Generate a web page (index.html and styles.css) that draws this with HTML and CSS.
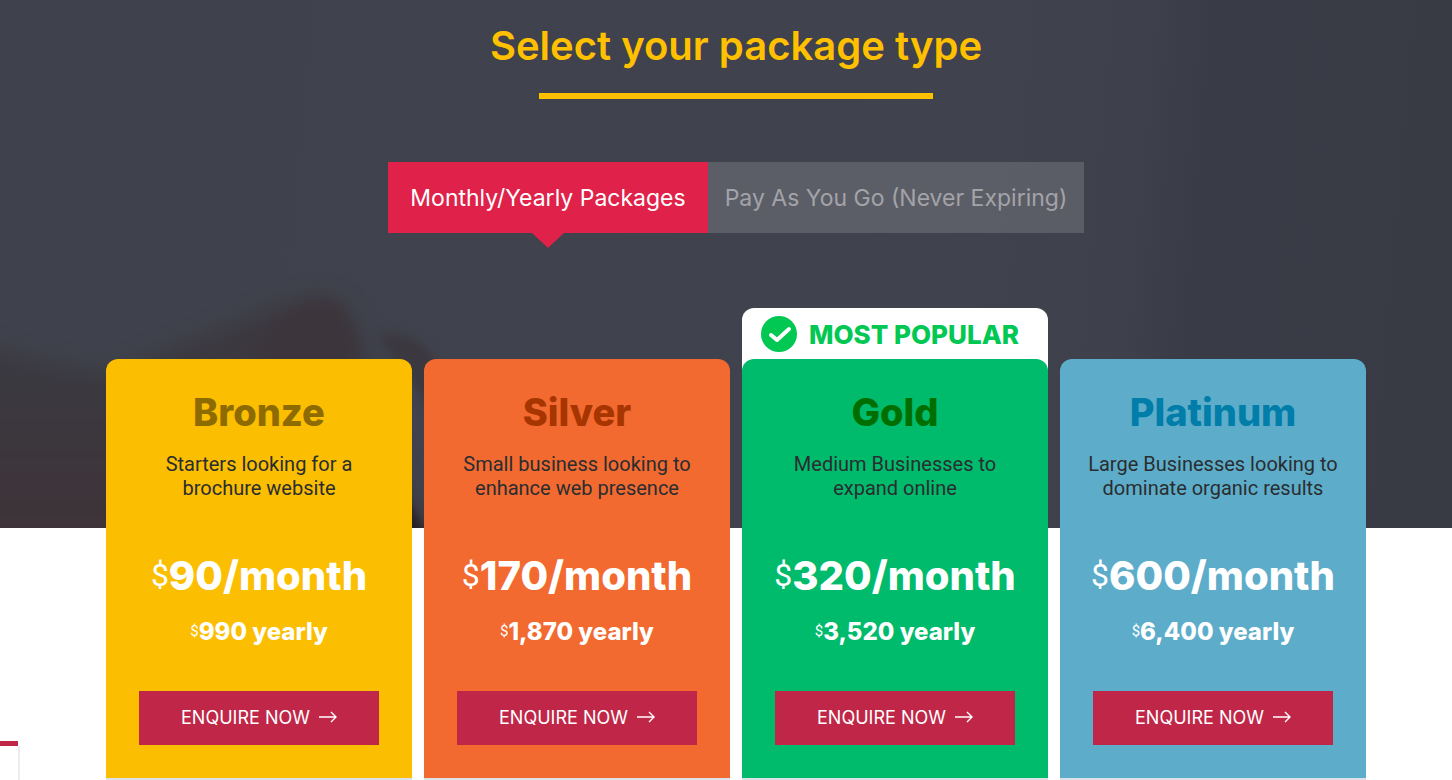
FILE: index.html
```html
<!DOCTYPE html>
<html lang="en">
<head>
  <meta charset="UTF-8">
  <meta name="viewport" content="width=device-width, initial-scale=1.0">
  <title>Packages</title>
  <link rel="stylesheet" href="styles.css">
</head>
<body>

<section class="hero">
  <svg class="hero-bg" viewBox="0 0 1452 528" preserveAspectRatio="none" aria-hidden="true">
    <defs>
      <filter id="soft" x="-20%" y="-20%" width="140%" height="140%" color-interpolation-filters="sRGB">
        <feGaussianBlur stdDeviation="10"/>
      </filter>
      <filter id="softer" x="-20%" y="-20%" width="140%" height="140%" color-interpolation-filters="sRGB">
        <feGaussianBlur stdDeviation="4"/>
      </filter>
      <linearGradient id="hand" x1="0" y1="0" x2="0" y2="1">
        <stop offset="0" stop-color="#3d373e"/>
        <stop offset="0.3" stop-color="#3b3940"/>
        <stop offset="1" stop-color="#3e3237"/>
      </linearGradient>
    </defs>
    <path d="M-40 335 Q20 362 110 372 Q170 350 250 318 Q315 288 340 303 Q358 325 366 360 L400 480 L440 560 L-40 560 Z" fill="url(#hand)" filter="url(#soft)"/>
    <path d="M280 320 Q315 290 338 302 Q352 318 358 350 L355 380 L230 380 Z" fill="#3d343a" filter="url(#softer)" opacity="0.5"/>
    <path d="M378 336 Q405 330 422 345 Q445 365 455 400 L440 420 L410 380 Z" fill="#3c383f" filter="url(#softer)"/>
    <path d="M396 490 L412 508 L440 560 L390 560 Z" fill="#242125" filter="url(#softer)"/>
  </svg>
  <div class="hero-content">
    <h1>Select your package type</h1>
    <div class="tabs">
      <button type="button" class="tab active">Monthly/Yearly Packages</button>
      <button type="button" class="tab">Pay As You Go (Never Expiring)</button>
    </div>
  </div>
</section>

<section class="packages">
  <div class="card bronze">
    <h2>Bronze</h2>
    <p class="desc">Starters looking for a<br>brochure website</p>
    <p class="price"><span>$</span>90/month</p>
    <p class="yearly"><span>$</span>990 yearly</p>
    <a class="enquire" href="#">ENQUIRE NOW
      <svg viewBox="0 0 18 12" aria-hidden="true"><path d="M0 6H17M12 1L17 6L12 11"/></svg>
    </a>
  </div>
  <div class="card silver">
    <h2>Silver</h2>
    <p class="desc">Small business looking to<br>enhance web presence</p>
    <p class="price"><span>$</span>170/month</p>
    <p class="yearly"><span>$</span>1,870 yearly</p>
    <a class="enquire" href="#">ENQUIRE NOW
      <svg viewBox="0 0 18 12" aria-hidden="true"><path d="M0 6H17M12 1L17 6L12 11"/></svg>
    </a>
  </div>
  <div class="card gold">
    <div class="popular">
      <svg viewBox="0 0 36 36" aria-hidden="true">
        <circle cx="18" cy="18" r="18"/>
        <path d="M10 19L16 24L28 13"/>
      </svg>
      MOST POPULAR
    </div>
    <h2>Gold</h2>
    <p class="desc">Medium Businesses to<br>expand online</p>
    <p class="price"><span>$</span>320/month</p>
    <p class="yearly"><span>$</span>3,520 yearly</p>
    <a class="enquire" href="#">ENQUIRE NOW
      <svg viewBox="0 0 18 12" aria-hidden="true"><path d="M0 6H17M12 1L17 6L12 11"/></svg>
    </a>
  </div>
  <div class="card platinum">
    <h2>Platinum</h2>
    <p class="desc">Large Businesses looking to<br>dominate organic results</p>
    <p class="price"><span>$</span>600/month</p>
    <p class="yearly"><span>$</span>6,400 yearly</p>
    <a class="enquire" href="#">ENQUIRE NOW
      <svg viewBox="0 0 18 12" aria-hidden="true"><path d="M0 6H17M12 1L17 6L12 11"/></svg>
    </a>
  </div>
</section>

<div class="side-panel"></div>

</body>
</html>
```
FILE: styles.css
```css
* {
  box-sizing: border-box;
}
body {
  margin: 0;
  background: #fff;
  font-family: Inter, "Liberation Sans", sans-serif;
}
h1, h2, p {
  margin: 0;
}

/* Hero */
.hero {
  position: relative;
  overflow: hidden;
  background: linear-gradient(95deg, #3f424c 0%, #40424d 65%, #3e404b 77%, #393b46 81%, #383a44 100%);
}
.hero-bg {
  position: absolute;
  top: 0;
  left: 0;
  width: 100%;
  height: 100%;
}
.hero-content {
  position: relative;
  display: flex;
  flex-direction: column;
  align-items: center;
  padding: 22px 0 295px 20px;
}
h1 {
  color: #ffc000;
  font-size: 40px;
  font-weight: 600;
  line-height: 48px;
}
h1::after {
  content: "";
  display: block;
  width: 80%;
  height: 6px;
  margin: 23px auto 0;
  background: #ffc000;
}
.tabs {
  display: grid;
  grid-template-columns: 320px 376px;
  margin-top: 63px;
}
.tab {
  position: relative;
  height: 71px;
  padding: 0;
  border: none;
  background: rgba(255, 255, 255, 0.15);
  color: #a3a3a8;
  font-family: inherit;
  font-size: 23px;
  cursor: pointer;
}
.tab.active {
  background: #e02149;
  color: #fff;
}
.tab.active::after {
  content: "";
  position: absolute;
  top: 100%;
  left: 50%;
  margin-left: -16px;
  border: 16px solid transparent;
  border-top: 15px solid #e02149;
  border-bottom: 0;
}

/* Packages */
.packages {
  position: relative;
  z-index: 1;
  display: grid;
  grid-template-columns: repeat(4, 1fr);
  gap: 12px;
  margin-top: -169px;
  padding: 0 86px 0 106px;
}
.card {
  position: relative;
  display: flex;
  flex-direction: column;
  align-items: center;
  padding-top: 29px;
  border-radius: 12px 12px 0 0;
  color: #fff;
  text-align: center;
}
.card::after {
  content: "";
  align-self: stretch;
  height: 2px;
  margin-top: 33px;
  background: #dde2e8;
}
.bronze { background: #fbbe00; }
.silver { background: #f26a30; }
.gold { background: #00bb6c; }
.platinum { background: #5dadca; }
.bronze h2 { color: #8d6b00; }
.silver h2 { color: #a63500; }
.gold h2 { color: #006e00; }
.platinum h2 { color: #007da9; }

h2 {
  font-size: 38px;
  font-weight: 800;
  line-height: 48px;
}
.desc {
  margin-top: 16px;
  color: #2a2d30;
  font-family: Roboto, sans-serif;
  font-size: 20px;
  line-height: 24px;
}
.price {
  height: 48px;
  margin-top: 52px;
  font-size: 40px;
  font-weight: 800;
  line-height: 48px;
}
.yearly {
  height: 32px;
  margin-top: 16px;
  font-size: 24px;
  font-weight: 800;
  line-height: 32px;
}
.price span,
.yearly span {
  font-family: Roboto, sans-serif;
  font-size: 32px;
  font-weight: 400;
  line-height: 1;
  vertical-align: 4px;
}
.yearly span {
  font-size: 15px;
}
.enquire {
  display: flex;
  justify-content: center;
  align-items: center;
  gap: 9px;
  width: 240px;
  height: 54px;
  margin-top: 43px;
  padding-bottom: 2px;
  background: #c02648;
  color: #fff;
  font-size: 18px;
  text-decoration: none;
}
.enquire svg {
  width: 18px;
  height: 12px;
  fill: none;
  stroke: #fff;
  stroke-width: 1.4;
}

/* Badge above the gold card */
.popular {
  position: absolute;
  z-index: -1;
  top: -51px;
  left: 0;
  display: flex;
  align-items: center;
  gap: 12px;
  width: 100%;
  height: 68px;
  padding: 0 0 16px 19px;
  border-radius: 12px 12px 0 0;
  background: #fff;
  color: #00c853;
  font-size: 26px;
  font-weight: 800;
  white-space: nowrap;
}
.popular svg {
  flex: none;
  width: 36px;
  height: 36px;
  fill: #00c853;
}
.popular path {
  fill: none;
  stroke: #fff;
  stroke-width: 4;
  stroke-linecap: round;
  stroke-linejoin: round;
}

/* Panel in the bottom left corner */
.side-panel {
  position: fixed;
  bottom: 0;
  left: 0;
  width: 20px;
  height: 34px;
  border-right: 2px solid #ededed;
  background: #fff;
}
.side-panel::before {
  content: "";
  position: absolute;
  bottom: 100%;
  left: 0;
  width: 100%;
  height: 5px;
  background: #c02648;
}
```
